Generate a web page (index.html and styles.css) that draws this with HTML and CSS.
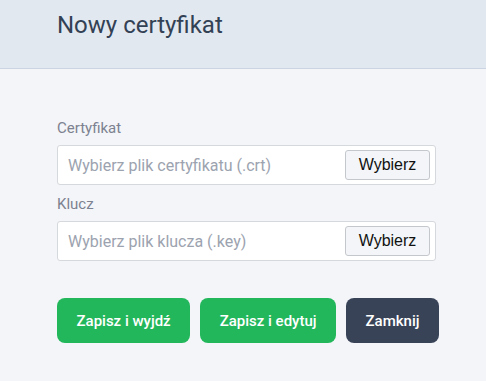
FILE: index.html
```html
<html lang="pl">
<head>
  <meta charset="UTF-8">
  <title>Nowy certyfikat</title>
  <link rel="stylesheet" href="styles.css">
</head>
<body>
  <div class="header">
    <h2>Nowy certyfikat</h2>
  </div>
  <div class="content">
    <div class="field">
      <label>Certyfikat</label>
      <div class="file-input">
        <span class="placeholder">Wybierz plik certyfikatu (.crt)</span>
        <button class="pick">Wybierz</button>
      </div>
    </div>
    <div class="field">
      <label>Klucz</label>
      <div class="file-input">
        <span class="placeholder">Wybierz plik klucza (.key)</span>
        <button class="pick">Wybierz</button>
      </div>
    </div>
    <div class="actions">
      <button class="btn green">Zapisz i wyjdź</button>
      <button class="btn green">Zapisz i edytuj</button>
      <button class="btn dark">Zamknij</button>
    </div>
  </div>
</body>
</html>
```

FILE: styles.css
```css
body {
  margin: 0;
  background: #f4f5f9;
  font-family: Roboto, sans-serif;
}

.header {
  height: 69px;
  background: #e2e8f0;
  border-bottom: 1px solid #cbd5e1;
  padding-left: 57px;
  box-sizing: border-box;
}

.header h2 {
  margin: 0;
  padding-top: 11px;
  font-size: 24px;
  font-weight: 400;
  color: #334155;
}

.content {
  padding: 50px 0 0 57px;
  width: 379px;
}

.field label {
  display: block;
  font-size: 15px;
  color: #7c8290;
  margin-bottom: 8px;
}

.field {
  margin-bottom: 10px;
}

.file-input {
  height: 40px;
  box-sizing: border-box;
  background: white;
  border: 1px solid #d5d8dd;
  border-radius: 3px;
  display: flex;
  align-items: center;
  justify-content: space-between;
  padding: 0 5px 0 10px;
}

.placeholder {
  font-size: 16px;
  color: #9ca3af;
}

.pick {
  height: 30px;
  width: 85px;
  background: #f3f5f8;
  border: 1px solid #c4c8cd;
  border-radius: 3px;
  font-family: 'Liberation Sans', Arial, sans-serif;
  font-size: 16px;
  color: #111;
  padding: 0;
}

.actions {
  display: flex;
  gap: 10px;
  margin-top: 37px;
}

.btn {
  height: 45px;
  border: none;
  border-radius: 8px;
  color: white;
  font-family: Roboto, sans-serif;
  font-size: 15px;
  font-weight: 500;
  padding: 0 19.5px;
  white-space: nowrap;
  flex-shrink: 0;
}

.green {
  background: #22b75b;
}

.dark {
  background: #394358;
}
```
